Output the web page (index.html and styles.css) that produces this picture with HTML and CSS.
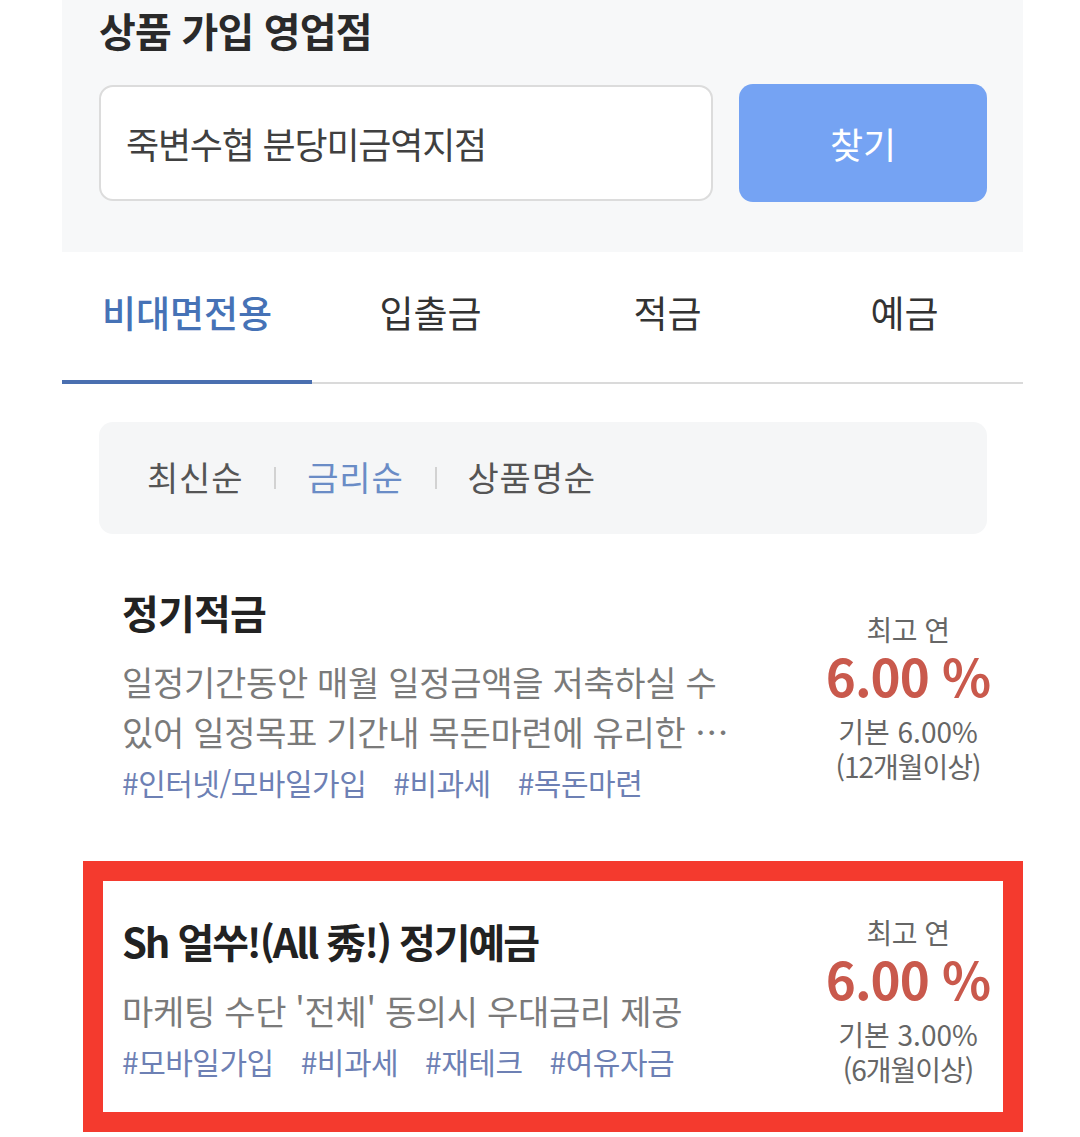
FILE: index.html
```html
<!DOCTYPE html>
<html lang="ko">
<head>
<meta charset="utf-8">
<title>상품 가입 영업점</title>
<link rel="stylesheet" href="styles.css">
</head>
<body>
<div class="page">
  <section class="branch">
    <h2 class="branch-title">상품 가입 영업점</h2>
    <div class="branch-row">
      <div class="branch-input">죽변수협 분당미금역지점</div>
      <button class="branch-btn" type="button">찾기</button>
    </div>
  </section>

  <nav class="tabs">
    <div class="tab active">비대면전용</div>
    <div class="tab">입출금</div>
    <div class="tab">적금</div>
    <div class="tab">예금</div>
  </nav>

  <div class="sort">
    <span class="sort-item">최신순</span>
    <span class="sort-sep"></span>
    <span class="sort-item active">금리순</span>
    <span class="sort-sep"></span>
    <span class="sort-item">상품명순</span>
  </div>

  <ul class="products">
    <li class="product">
      <div class="product-info">
        <h3 class="product-name">정기적금</h3>
        <p class="product-desc">일정기간동안 매월 일정금액을 저축하실 수 있어 일정목표 기간내 목돈마련에 유리한 …</p>
        <p class="product-tags"><span>#인터넷/모바일가입</span><span>#비과세</span><span>#목돈마련</span></p>
      </div>
      <div class="product-rate">
        <div class="rate-label">최고 연</div>
        <div class="rate-value">6.00 %</div>
        <div class="rate-base">기본 6.00%</div>
        <div class="rate-term">(12개월이상)</div>
      </div>
    </li>
    <li class="product highlight">
      <div class="product-info">
        <h3 class="product-name product-name-long">Sh 얼쑤!(All 秀!) 정기예금</h3>
        <p class="product-desc">마케팅 수단 '전체' 동의시 우대금리 제공</p>
        <p class="product-tags"><span>#모바일가입</span><span>#비과세</span><span>#재테크</span><span>#여유자금</span></p>
      </div>
      <div class="product-rate">
        <div class="rate-label">최고 연</div>
        <div class="rate-value">6.00 %</div>
        <div class="rate-base">기본 3.00%</div>
        <div class="rate-term">(6개월이상)</div>
      </div>
    </li>
  </ul>
</div>
</body>
</html>
```

FILE: styles.css
```css
* { box-sizing: border-box; }

body {
  margin: 0;
  background: #ffffff;
  font-family: "Noto Sans CJK KR", "Noto Sans", sans-serif;
  color: #333;
  word-break: keep-all;
}

.page {
  width: 961px;
  margin-left: 62px;
}

/* branch section */
.branch {
  background: #f7f8f9;
  padding: 5px 36px 50px 37px;
}

.branch-title {
  margin: 0 0 29px;
  font-size: 40px;
  line-height: 50px;
  font-weight: 700;
  letter-spacing: -0.8px;
  color: #2a2a2a;
}

.branch-row {
  display: flex;
  align-items: center;
  gap: 26px;
}

.branch-input {
  width: 614px;
  height: 116px;
  display: flex;
  align-items: center;
  padding-left: 25px;
  background: #fff;
  border: 2px solid #dcdcdc;
  border-radius: 14px;
  font-size: 36px;
  letter-spacing: -1.2px;
  color: #404040;
}

.branch-btn {
  flex: 1;
  height: 118px;
  border: none;
  border-radius: 14px;
  background: #75a3f3;
  color: #fff;
  font-family: inherit;
  font-size: 36px;
  letter-spacing: 0;
  padding: 0;
}

/* tabs */
.tabs {
  display: grid;
  grid-template-columns: 250px repeat(3, 1fr);
  border-bottom: 2px solid #dadada;
}

.tab {
  text-align: center;
  padding: 35px 0 45px;
  font-size: 37px;
  line-height: 50px;
  letter-spacing: 0;
  color: #333;
}

.tab.active {
  color: #4672b6;
  font-weight: 500;
  border-bottom: 4px solid #4a6fb0;
  padding-bottom: 43px;
  margin-bottom: -2px;
}

/* sort */
.sort {
  margin: 38px 36px 0 37px;
  height: 112px;
  display: flex;
  align-items: center;
  padding-left: 48px;
  padding-bottom: 4px;
  background: #f5f6f7;
  border-radius: 14px;
  font-size: 34px;
  letter-spacing: 0.8px;
  color: #555;
}

.sort-item.active {
  color: #6a8cc6;
}

.sort-sep {
  width: 2px;
  height: 22px;
  margin: 4px 31px 0;
  background: #d2d2d2;
}

/* products */
.products {
  list-style: none;
  margin: 0 0 0 21px;
  padding: 0;
  display: flex;
  flex-direction: column;
  gap: 9px;
}

.product {
  display: flex;
  align-items: center;
  border: 20px solid transparent;
  padding: 33px 0 25px 19px;
}

.product.highlight {
  border-color: #f43a2e;
}

.product-info {
  flex: 1;
  min-width: 0;
}

.product-name {
  margin: 0 0 20px;
  font-size: 40px;
  line-height: 50px;
  font-weight: 700;
  letter-spacing: -0.8px;
  color: #222;
}

.product-name-long {
  letter-spacing: -2.1px;
}

.product-desc {
  margin: 0;
  max-width: 640px;
  font-size: 34px;
  line-height: 50px;
  letter-spacing: -0.3px;
  color: #7a7a7a;
}

.product-tags {
  margin: 0;
  font-size: 30px;
  line-height: 50px;
  letter-spacing: -0.5px;
  color: #6d80b4;
}

.product-tags span {
  margin-right: 27px;
}

.product-rate {
  flex: none;
  width: 190px;
  text-align: center;
  color: #666;
}

.rate-label {
  font-size: 28px;
  line-height: 36px;
  letter-spacing: -0.5px;
}

.rate-value {
  font-size: 51px;
  line-height: 56px;
  font-weight: 700;
  letter-spacing: -1px;
  color: #c9594c;
}

.rate-base {
  margin-top: 11px;
  font-size: 28px;
  line-height: 35px;
  letter-spacing: 0;
}

.rate-term {
  font-size: 28px;
  line-height: 35px;
  letter-spacing: -1px;
}
```
